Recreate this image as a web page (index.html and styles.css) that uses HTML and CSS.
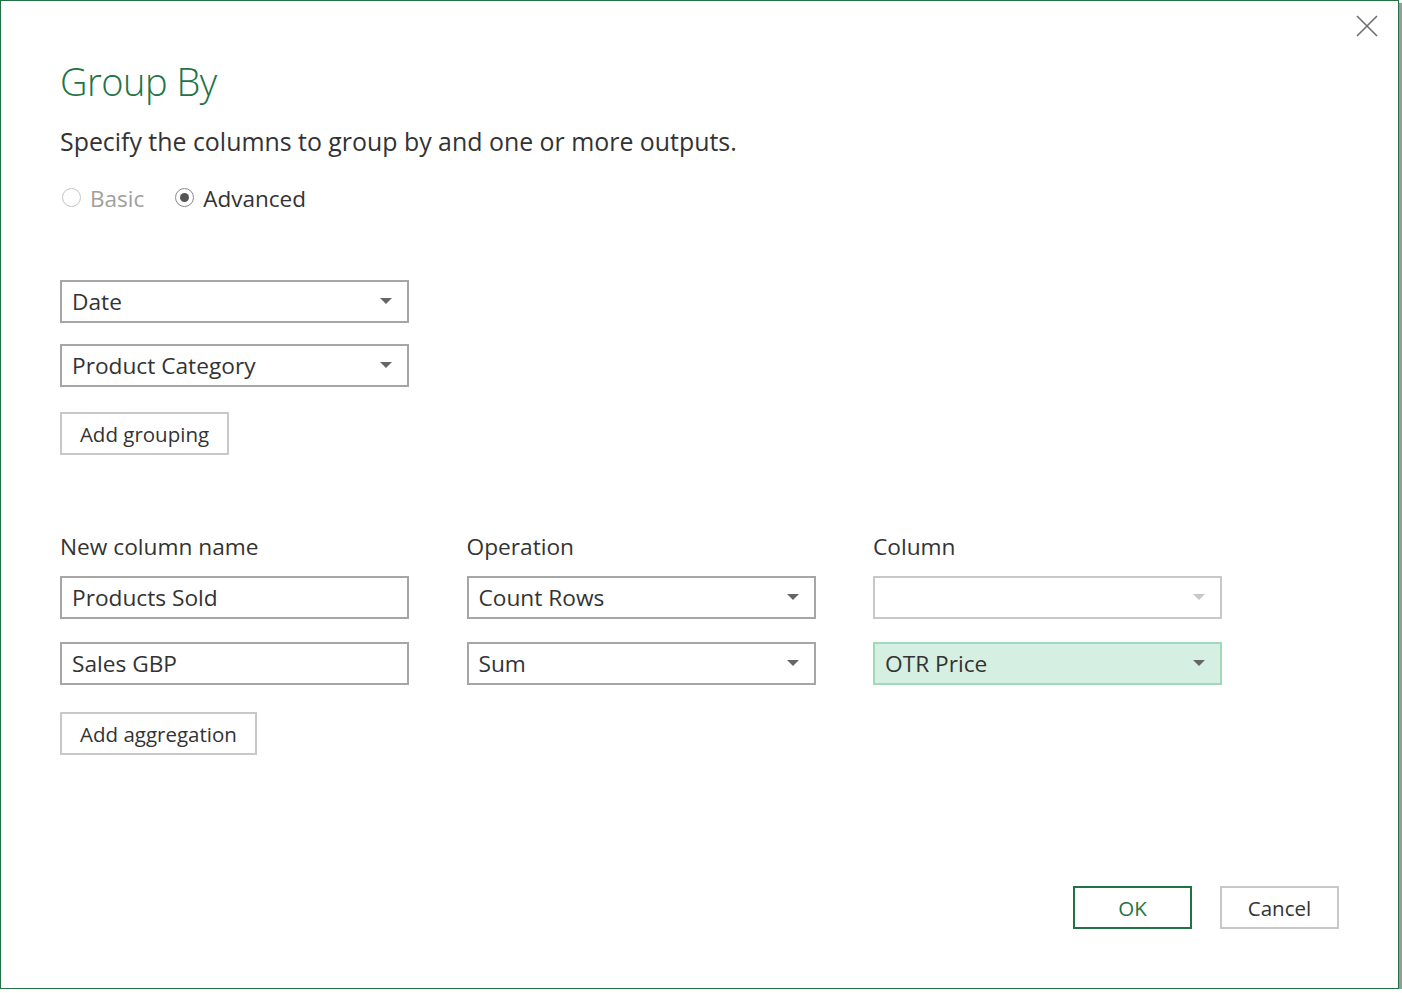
FILE: index.html
```html
<!DOCTYPE html>
<html>
<head>
<meta charset="utf-8">
<link rel="stylesheet" href="styles.css">
</head>
<body>
<div class="dialog">
  <button class="close" aria-label="Close">
    <svg width="22" height="22" viewBox="0 0 22 22"><path d="M1 1 L21 21 M21 1 L1 21" stroke="#6e6e6e" stroke-width="1.6" fill="none"/></svg>
  </button>
  <h1 class="title">Group By</h1>
  <p class="subtitle">Specify the columns to group by and one or more outputs.</p>
  <div class="radios">
    <label class="radio disabled"><span class="circle"></span>Basic</label>
    <label class="radio checked"><span class="circle"><span class="dot"></span></span>Advanced</label>
  </div>

  <div class="grouping">
    <div class="select"><span>Date</span><span class="arrow"></span></div>
    <div class="select"><span>Product Category</span><span class="arrow"></span></div>
    <button class="btn add-grouping">Add grouping</button>
  </div>

  <div class="agg">
    <div class="agg-grid">
      <div class="label">New column name</div>
      <div class="label">Operation</div>
      <div class="label">Column</div>

      <div class="input">Products Sold</div>
      <div class="select"><span>Count Rows</span><span class="arrow"></span></div>
      <div class="select disabled"><span></span><span class="arrow"></span></div>

      <div class="input">Sales GBP</div>
      <div class="select"><span>Sum</span><span class="arrow"></span></div>
      <div class="select highlight"><span>OTR Price</span><span class="arrow"></span></div>
    </div>
    <button class="btn add-agg">Add aggregation</button>
  </div>

  <div class="footer">
    <button class="btn ok">OK</button>
    <button class="btn cancel">Cancel</button>
  </div>
</div>
</body>
</html>
```

FILE: styles.css
```css
html, body {
  margin: 0;
  padding: 0;
  background: #ffffff;
}
body {
  font-family: "Open Sans", "Noto Sans", sans-serif;
  color: #333333;
}
.dialog {
  position: relative;
  width: 1399px;
  height: 989px;
  box-sizing: border-box;
  border: 1px solid #217346;
  background: #fff;
  box-shadow: 3px 3px 1px #9a9a9a;
  padding: 0 59px 59px 59px;
  display: flex;
  flex-direction: column;
}
.close {
  position: absolute;
  top: 13px;
  right: 19px;
  width: 24px;
  height: 24px;
  padding: 0;
  border: none;
  background: none;
  display: flex;
  align-items: center;
  justify-content: center;
}
.title {
  margin: 55px 0 0 0;
  font-weight: 300;
  font-size: 38px;
  line-height: 50px;
  color: #217346;
  letter-spacing: -0.5px;
}
.subtitle {
  margin: 19px 0 0 0;
  font-size: 24.9px;
  line-height: 32px;
}
.radios {
  margin-top: 26px;
  display: flex;
  gap: 29px;
  font-size: 22.5px;
  line-height: 32px;
}
.radio {
  display: flex;
  align-items: center;
  gap: 9px;
}
.radio.disabled {
  color: #a0a0a0;
}
.circle {
  width: 17px;
  height: 17px;
  border: 1px solid #c4c4c4;
  border-radius: 50%;
  box-sizing: content-box;
  display: flex;
  align-items: center;
  justify-content: center;
  margin-top: -4px;
  margin-left: 2px;
}
.radio.checked .circle {
  border-color: #8a8a8a;
}
.dot {
  width: 9px;
  height: 9px;
  border-radius: 50%;
  background: #555;
}
.grouping {
  margin-top: 65px;
  display: flex;
  flex-direction: column;
  align-items: flex-start;
  gap: 21px;
}
.select, .input {
  width: 349px;
  height: 43px;
  box-sizing: border-box;
  border: 2px solid #a6a6a6;
  background: #fff;
  display: flex;
  align-items: center;
  justify-content: space-between;
  padding: 0 15px 0 10px;
  font-size: 22.7px;
  color: #333;
}
.arrow {
  width: 0;
  height: 0;
  border-left: 6px solid transparent;
  border-right: 6px solid transparent;
  border-top: 6px solid #666;
  margin-top: -2px;
}
.select.disabled {
  border-color: #c8c8c8;
}
.select.disabled .arrow {
  border-top-color: #c8c8c8;
}
.select.highlight {
  background: #d5f0e2;
  border-color: #a3d9bb;
}
.btn {
  font-family: "Open Sans", "Noto Sans", sans-serif;
  font-size: 20.5px;
  color: #333;
  background: #fff;
  border: 2px solid #c8c8c8;
  height: 43px;
  box-sizing: border-box;
  padding: 0 18px;
  margin: 0;
}
.add-grouping {
  margin-top: 4px;
  width: 169px;
  padding: 0;
}
.agg {
  margin-top: 77px;
  display: flex;
  flex-direction: column;
  align-items: flex-start;
}
.agg-grid {
  display: grid;
  grid-template-columns: 349px 349px 349px;
  column-gap: 57.5px;
  row-gap: 23px;
}
.label {
  font-size: 22.7px;
  line-height: 30px;
  margin-bottom: -9px;
}
.input {
  justify-content: flex-start;
}
.add-agg {
  margin-top: 27px;
  width: 197px;
  padding: 0;
}
.footer {
  margin-top: auto;
  display: flex;
  justify-content: flex-end;
  gap: 28px;
  padding-right: 0;
}
.ok, .cancel {
  width: 119px;
  padding: 0;
}
.ok {
  border-color: #217346;
  color: #217346;
}
```
